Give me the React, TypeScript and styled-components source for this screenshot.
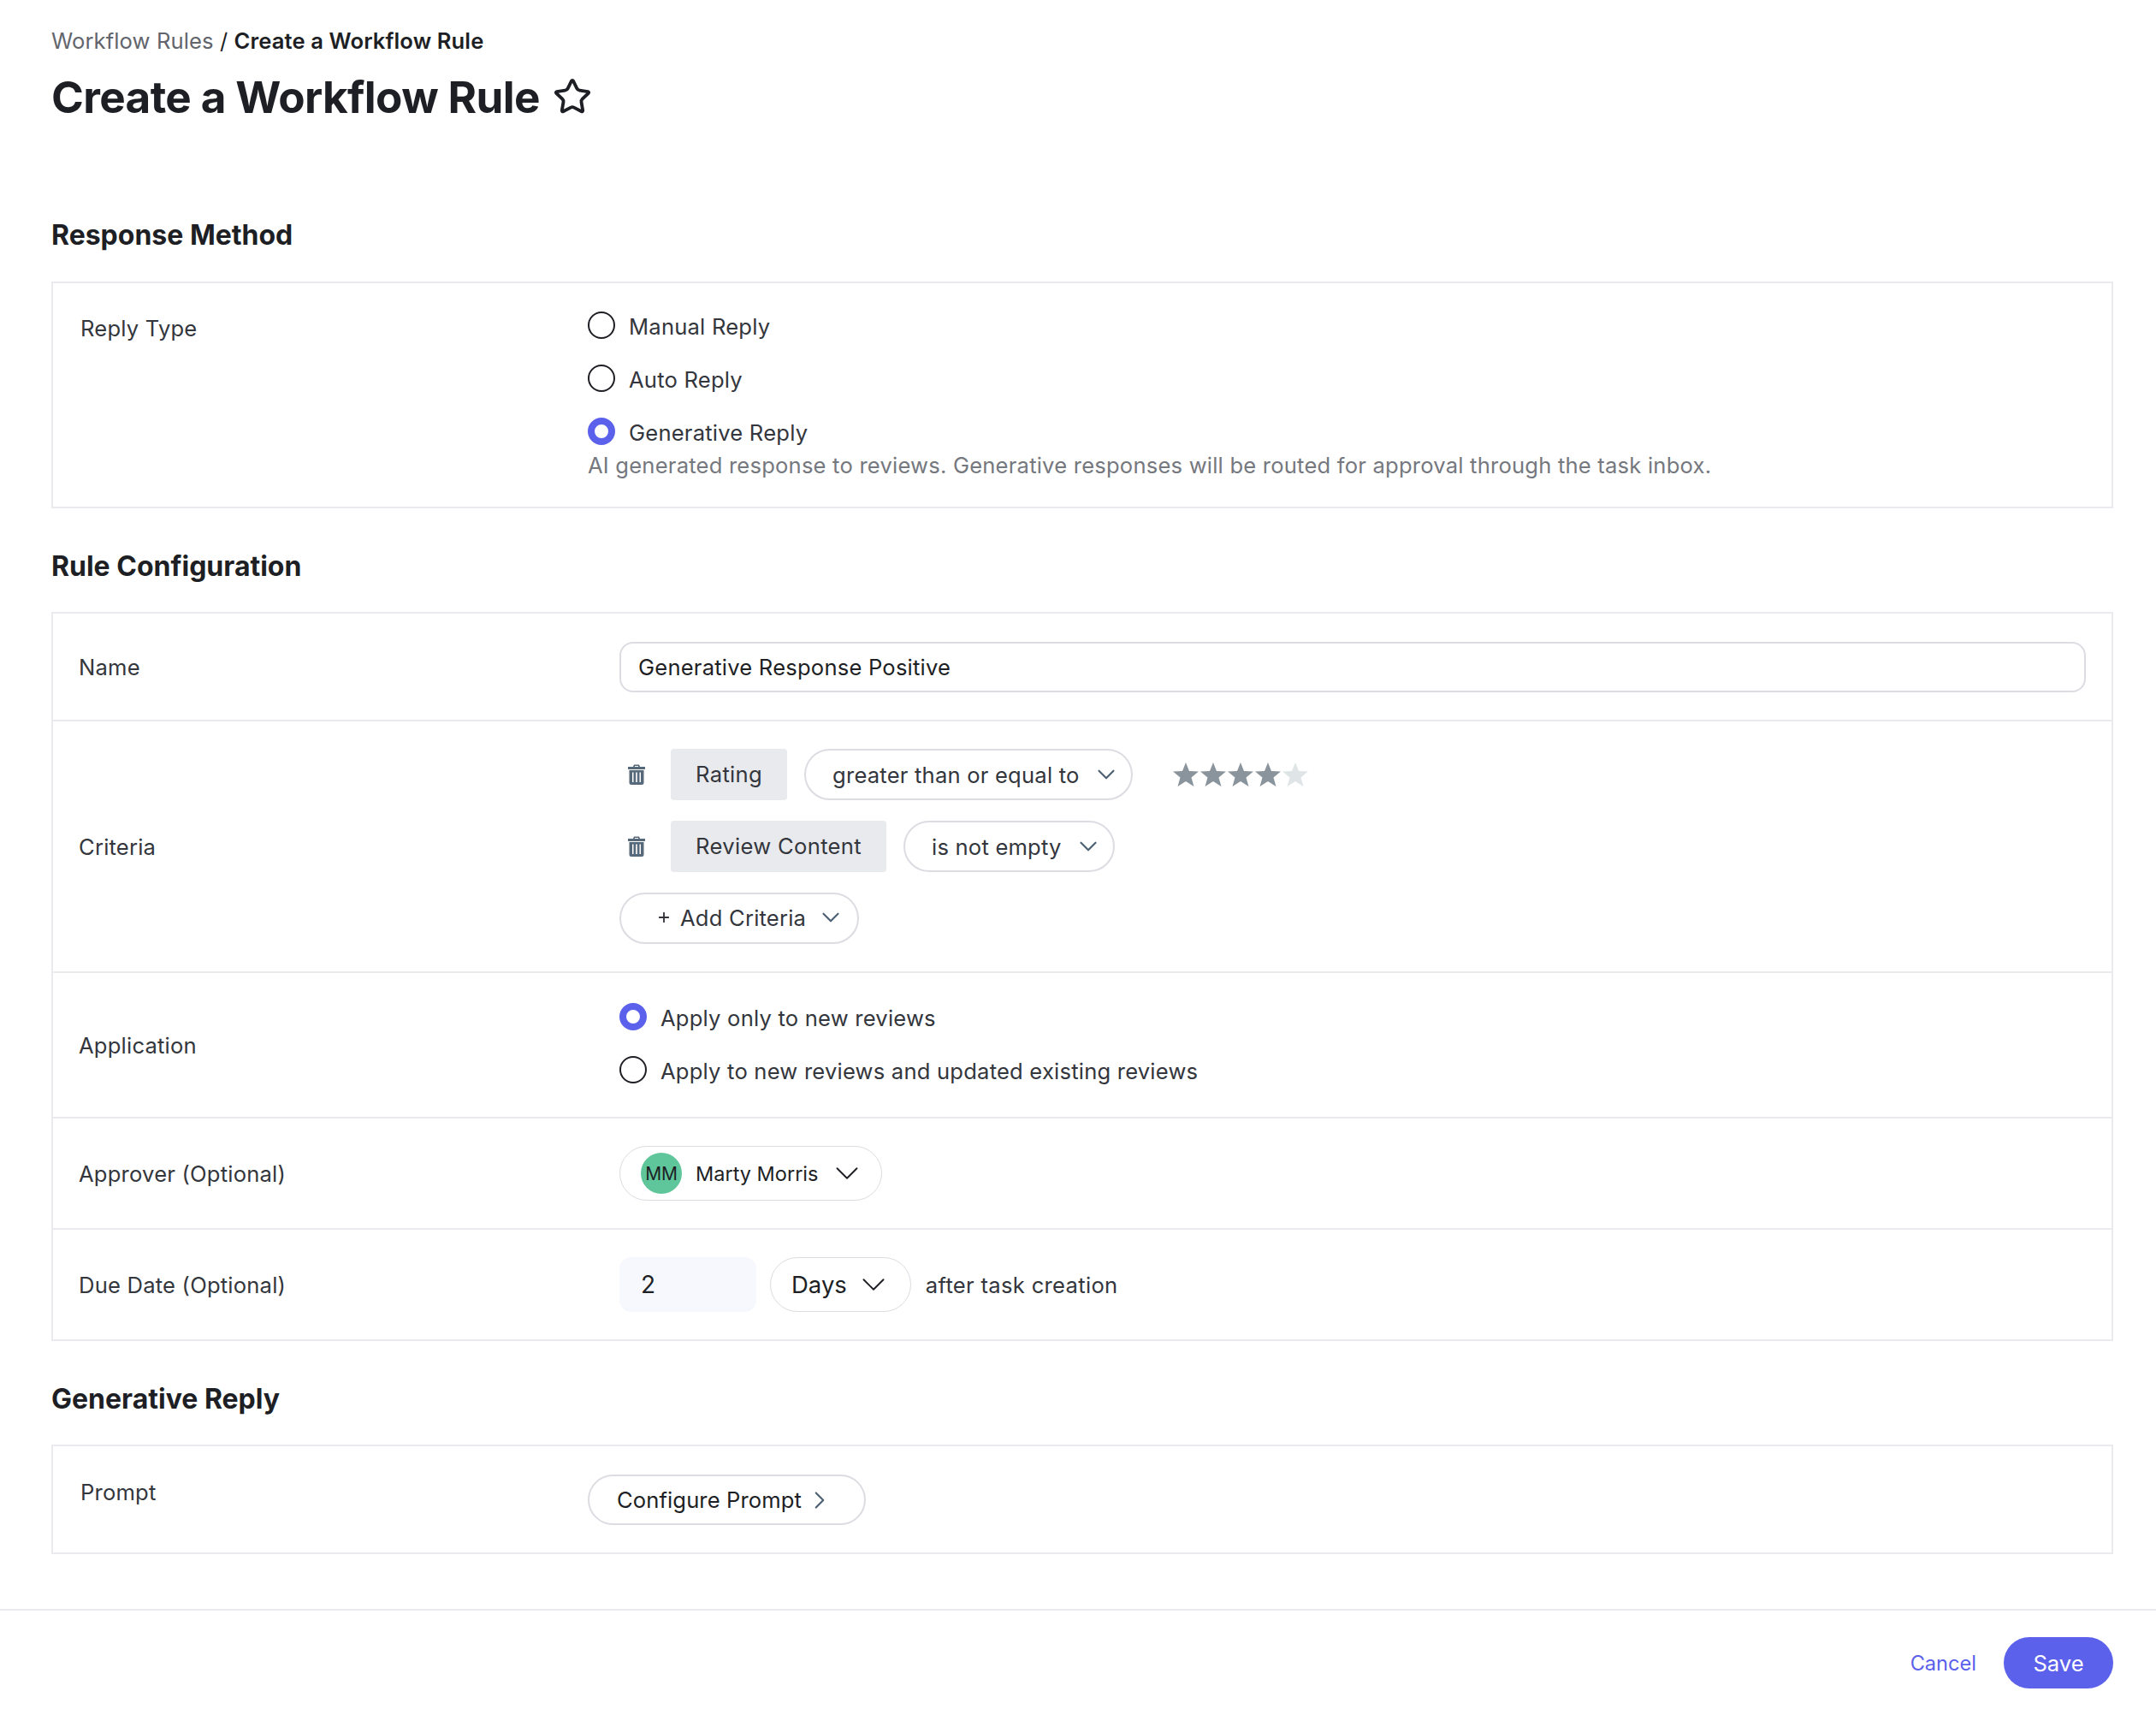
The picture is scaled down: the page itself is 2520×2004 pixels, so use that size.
import styled, { createGlobalStyle } from 'styled-components';
import { ChevronDown, ChevronRight, Plus, Star } from 'lucide-react';

const GlobalStyle = createGlobalStyle`
  html, body {
    margin: 0;
    padding: 0;
    background: #fff;
  }
  body {
    font-family: Inter, "Liberation Sans", sans-serif;
    color: #1d1f24;
    font-size: 25.6px;
    letter-spacing: 0.2px;
  }
  * {
    box-sizing: border-box;
  }
`;

const TrashIcon = () => (
  <svg width="22" height="24" viewBox="0 0 22 24" fill="#56697a">
    <path d="M7 3 L8 0.5 H14 L15 3 H21 V6 H1 V3 Z M9.2 2 L8.8 3 H13.2 L12.8 2 Z" fillRule="evenodd" />
    <path
      d="M2.5 7 H19.5 V21.5 A2.5 2.5 0 0 1 17 24 H5 A2.5 2.5 0 0 1 2.5 21.5 Z M6 9.5 V21 H7.5 V9.5 Z M10.2 9.5 V21 H11.8 V9.5 Z M14.5 9.5 V21 H16 V9.5 Z"
      fillRule="evenodd"
    />
  </svg>
);

const RatingStar = ({ filled }: { filled: boolean }) => (
  <svg width="32" height="30" viewBox="0 0 32 30" fill={filled ? '#8a949c' : '#dfe4e6'}>
    <polygon points="16,1 20,11 31,11.5 22.5,18.5 25.5,29 16,23 6.5,29 9.5,18.5 1,11.5 12,11" />
  </svg>
);

const Chevron = () => <ChevronDown size={34} strokeWidth={1.5} color="#4d6073" />;

const App = () => {
  return (
    <>
      <GlobalStyle />
      <Content>
        <Breadcrumb>
          <BreadcrumbLink>Workflow Rules</BreadcrumbLink> / <strong>Create a Workflow Rule</strong>
        </Breadcrumb>
        <TitleRow>
          <Title>Create a Workflow Rule</Title>
          <Star size={46} strokeWidth={2} color="#1d1f24" />
        </TitleRow>

        <SectionHeading $top={110} $bottom={34}>
          Response Method
        </SectionHeading>
        <Card>
          <TopRow>
            <TopLabel>Reply Type</TopLabel>
            <RadioGroup>
              <RadioOption>
                <Radio />
                <OptionText>Manual Reply</OptionText>
              </RadioOption>
              <RadioOption>
                <Radio />
                <OptionText>Auto Reply</OptionText>
              </RadioOption>
              <div>
                <RadioOption>
                  <Radio $checked />
                  <OptionText>Generative Reply</OptionText>
                </RadioOption>
                <HelpText>
                  AI generated response to reviews. Generative responses will be routed for approval through the task
                  inbox.
                </HelpText>
              </div>
            </RadioGroup>
          </TopRow>
        </Card>

        <SectionHeading $top={48} $bottom={33}>
          Rule Configuration
        </SectionHeading>
        <Card>
          <Row $height={126}>
            <RowLabel>Name</RowLabel>
            <TextInput>Generative Response Positive</TextInput>
          </Row>
          <Row $height={294}>
            <RowLabel>Criteria</RowLabel>
            <CriteriaList>
              <CriteriaRow>
                <TrashButton>
                  <TrashIcon />
                </TrashButton>
                <Tag>Rating</Tag>
                <SelectPill>
                  greater than or equal to
                  <Chevron />
                </SelectPill>
                <Stars>
                  {[true, true, true, true, false].map((filled, i) => (
                    <RatingStar key={i} filled={filled} />
                  ))}
                </Stars>
              </CriteriaRow>
              <CriteriaRow>
                <TrashButton>
                  <TrashIcon />
                </TrashButton>
                <Tag>Review Content</Tag>
                <SelectPill>
                  is not empty
                  <Chevron />
                </SelectPill>
              </CriteriaRow>
              <AddCriteria>
                <Plus size={18} strokeWidth={2.5} />
                Add Criteria
                <Chevron />
              </AddCriteria>
            </CriteriaList>
          </Row>
          <Row $height={170}>
            <RowLabel>Application</RowLabel>
            <ApplicationOptions>
              <RadioOption>
                <Radio $checked />
                <OptionText>Apply only to new reviews</OptionText>
              </RadioOption>
              <RadioOption>
                <Radio />
                <OptionText>Apply to new reviews and updated existing reviews</OptionText>
              </RadioOption>
            </ApplicationOptions>
          </Row>
          <Row $height={130}>
            <RowLabel>Approver (Optional)</RowLabel>
            <ApproverPill>
              <Avatar>MM</Avatar>
              <ApproverName>Marty Morris</ApproverName>
              <ChevronDown size={46} strokeWidth={1} color="#1d1f24" />
            </ApproverPill>
          </Row>
          <Row $height={130}>
            <RowLabel>Due Date (Optional)</RowLabel>
            <DueDate>
              <NumberInput>2</NumberInput>
              <UnitPill>
                Days
                <ChevronDown size={46} strokeWidth={1} color="#1d1f24" />
              </UnitPill>
              <DueDateNote>after task creation</DueDateNote>
            </DueDate>
          </Row>
        </Card>

        <SectionHeading $top={48} $bottom={33}>
          Generative Reply
        </SectionHeading>
        <Card>
          <PromptRow>
            <PromptLabel>Prompt</PromptLabel>
            <ConfigureButton>
              Configure Prompt
              <ChevronRight size={34} strokeWidth={1.5} color="#4d6073" />
            </ConfigureButton>
          </PromptRow>
        </Card>
      </Content>

      <Footer>
        <CancelLink>Cancel</CancelLink>
        <SaveButton>Save</SaveButton>
      </Footer>
    </>
  );
};

const Content = styled.div`
  padding: 32px 50px 0 60px;
`;

const Breadcrumb = styled.div`
  font-size: 25.6px;
  line-height: 32px;
  letter-spacing: 0.1px;

  strong {
    font-weight: 600;
  }
`;

const BreadcrumbLink = styled.span`
  color: #62656c;
`;

const TitleRow = styled.div`
  display: flex;
  align-items: center;
  gap: 15px;
  margin-top: 17px;
  height: 64px;
`;

const Title = styled.h1`
  margin: 0;
  font-size: 51.2px;
  line-height: 64px;
  font-weight: 700;
  letter-spacing: -0.62px;
`;

const SectionHeading = styled.h2<{ $top: number; $bottom: number }>`
  margin: ${(p) => p.$top}px 0 ${(p) => p.$bottom}px;
  font-size: 32px;
  line-height: 40px;
  font-weight: 700;
  letter-spacing: 0;
`;

const Card = styled.section`
  border: 2px solid #e9e9ee;
`;

const TopRow = styled.div`
  display: flex;
  padding: 33px 32px 32px;
`;

const PromptRow = styled(TopRow)`
  padding: 33px 32px 32px;
`;

const TopLabel = styled.div`
  width: 593px;
  padding-top: 4px;
  line-height: 32px;
  color: #33363c;
`;

const PromptLabel = styled(TopLabel)`
  padding-top: 5px;
`;

const Row = styled.div<{ $height: number }>`
  display: flex;
  align-items: center;
  min-height: ${(p) => p.$height}px;
  padding: 0 30px;
  border-top: 2px solid #e9e9ee;

  &:first-child {
    border-top: 0;
    min-height: ${(p) => p.$height - 2}px;
    padding-top: 1px;
  }
`;

const RowLabel = styled.div`
  width: 632px;
  flex-shrink: 0;
  color: #33363c;
`;

const RadioGroup = styled.div`
  display: flex;
  flex-direction: column;
  gap: 28px;
`;

const ApplicationOptions = styled(RadioGroup)`
  margin-bottom: 3px;
`;

const RadioOption = styled.label`
  display: flex;
  align-items: flex-start;
  gap: 16px;
  color: #33363c;
`;

const OptionText = styled.span`
  padding-top: 2px;
  line-height: 32px;
`;

const Radio = styled.span<{ $checked?: boolean }>`
  width: 32px;
  height: 32px;
  border-radius: 50%;
  background: #fff;
  border: ${(p) => (p.$checked ? '8.5px solid #5b61eb' : '2px solid #1d1f24')};
`;

const HelpText = styled.div`
  margin-top: 6px;
  line-height: 32px;
  color: #75787e;
`;

const TextInput = styled.div`
  flex: 1;
  height: 59px;
  padding: 0 20px;
  display: flex;
  align-items: center;
  border: 2px solid #dcdce2;
  border-radius: 16px;
`;

const CriteriaList = styled.div`
  display: flex;
  flex-direction: column;
  align-items: flex-start;
  gap: 24px;
`;

const CriteriaRow = styled.div`
  display: flex;
  align-items: center;
  gap: 20px;
`;

const TrashButton = styled.span`
  width: 40px;
  padding-left: 9px;
  display: flex;
`;

const Tag = styled.span`
  height: 60px;
  padding: 0 29px 2px 29px;
  display: flex;
  align-items: center;
  background: #e9eaee;
  border-radius: 4px;
  color: #33363c;
  letter-spacing: 0.33px;
`;

const SelectPill = styled.span`
  height: 60px;
  padding: 0 12px 0 31px;
  display: flex;
  align-items: center;
  gap: 14px;
  border: 2px solid #dcdce2;
  border-radius: 30px;
  color: #33363c;
`;

const Stars = styled.span`
  display: flex;
  margin-left: 26px;
`;

const AddCriteria = styled.span`
  height: 60px;
  padding: 0 14px 2px 41px;
  display: flex;
  align-items: center;
  gap: 10px;
  border: 2px solid #dcdce2;
  border-radius: 30px;
  color: #33363c;

  svg:last-child {
    margin-left: 2px;
  }
`;

const ApproverPill = styled.span`
  height: 64px;
  padding: 0 17px 0 24px;
  display: flex;
  align-items: center;
  border: 1.5px solid #dcdce2;
  border-radius: 32px;
`;

const Avatar = styled.span`
  width: 48px;
  height: 48px;
  border-radius: 50%;
  display: flex;
  align-items: center;
  justify-content: center;
  background: #5fc69b;
  font-size: 21px;
  letter-spacing: -0.3px;
`;

const ApproverName = styled.span`
  margin: 0 11px 0 16px;
  font-size: 23.5px;
  letter-spacing: 0;
`;

const DueDate = styled.div`
  display: flex;
  align-items: center;
  gap: 16px;
  color: #33363c;
`;

const DueDateNote = styled.span`
  margin-left: 1px;
  letter-spacing: 0.3px;
`;

const NumberInput = styled.span`
  width: 160px;
  height: 64px;
  padding-left: 25px;
  display: flex;
  align-items: center;
  background: #f6f8fe;
  border-radius: 14px;
  color: #1d1f24;
  font-size: 28px;
`;

const UnitPill = styled.span`
  height: 64px;
  padding: 0 20px 0 24px;
  display: flex;
  align-items: center;
  gap: 8px;
  border: 1.5px solid #dcdce2;
  border-radius: 32px;
  color: #1d1f24;
  font-size: 27.5px;
  letter-spacing: 0;
`;

const ConfigureButton = styled.span`
  height: 59px;
  padding: 0 35px 0 32px;
  display: flex;
  align-items: center;
  gap: 4px;
  border: 2px solid #dcdce2;
  border-radius: 30px;
  color: #1d1f24;
  letter-spacing: 0.1px;
`;

const Footer = styled.footer`
  margin-top: 64px;
  padding: 31px 50px 30px;
  display: flex;
  justify-content: flex-end;
  align-items: center;
  gap: 32px;
  border-top: 2px solid #e9e9ee;
`;

const CancelLink = styled.a`
  color: #5b61eb;
  font-size: 23.6px;
  letter-spacing: 0;
`;

const SaveButton = styled.button`
  width: 128px;
  height: 60px;
  border: 0;
  border-radius: 30px;
  background: #5b61eb;
  color: #fff;
  font-family: inherit;
  font-size: 25.6px;
`;

export default App;
